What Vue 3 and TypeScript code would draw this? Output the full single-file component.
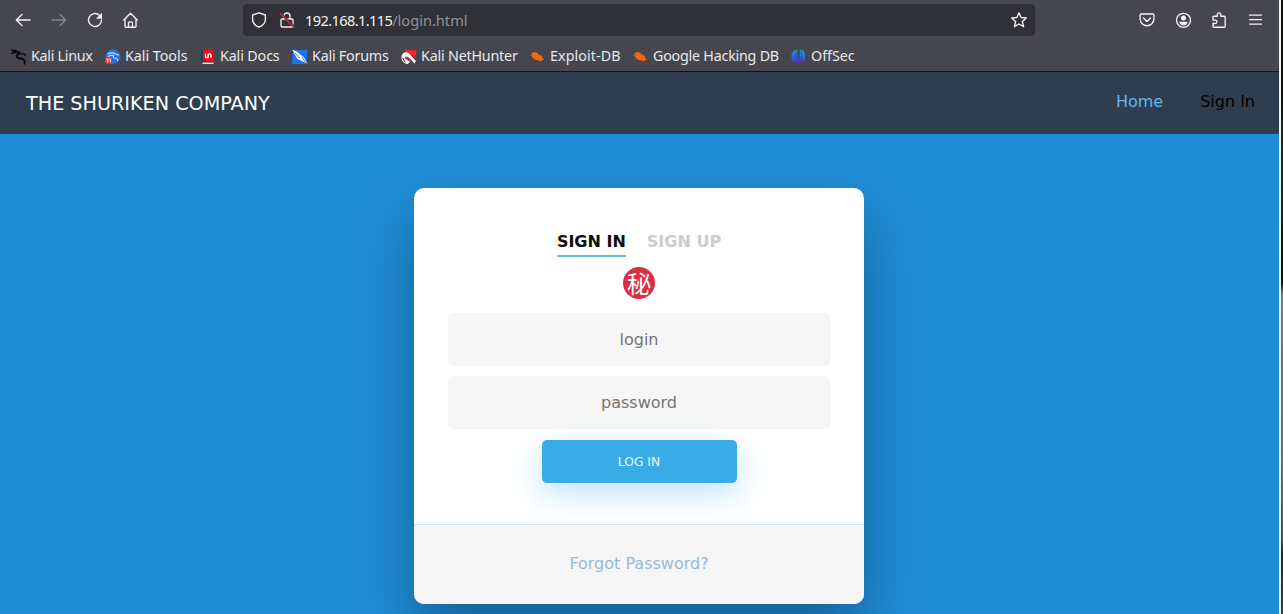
<script setup lang="ts">
interface Bookmark {
  label: string
  icon: string
  width: number
  spacing: number
}

const bookmarks: Bookmark[] = [
  { label: 'Kali Linux', icon: 'dragon', width: 94, spacing: -0.28 },
  { label: 'Kali Tools', icon: 'tools', width: 95, spacing: -0.03 },
  { label: 'Kali Docs', icon: 'docs', width: 92, spacing: -0.13 },
  { label: 'Kali Forums', icon: 'forums', width: 109, spacing: -0.22 },
  { label: 'Kali NetHunter', icon: 'nethunter', width: 129, spacing: -0.2 },
  { label: 'Exploit-DB', icon: 'bug', width: 103, spacing: 0.08 },
  { label: 'Google Hacking DB', icon: 'bug', width: 158, spacing: -0.23 },
  { label: 'OffSec', icon: 'offsec', width: 70, spacing: -0.03 },
]
</script>

<template>
  <div class="screen">
    <div class="window">
      <div class="toolbar">
        <div class="nav-buttons">
          <svg viewBox="0 0 16 16"><path d="M15 8H1.500M7 2.500 1.300 8 7 13.500" /></svg>
          <svg class="dim" viewBox="0 0 16 16"><path d="M1 8h13.500M9 2.500 14.700 8 9 13.500" /></svg>
          <svg viewBox="0 0 16 16"><path d="M12.400 3.200A6.500 6.500 0 1 0 14.500 8" /><path class="solid" d="M15 .8v6H9z" /></svg>
          <svg viewBox="0 0 16 16"><path d="M.8 8 7.500 1.200 14.200 8M2 7v7.200q0 1 1 1h9q1 0 1-1V7M5.500 15v-4.200q0-1 1-1h2q1 0 1 1V15" /></svg>
        </div>
        <div class="address">
          <svg viewBox="0 0 16 16"><path d="M8 .8 14.400 3v4.500c0 3.400-2.500 6-6.400 7.700C4.100 13.500 1.600 10.900 1.600 7.500V3z" /></svg>
          <svg class="lock" viewBox="0 0 16 16"><path d="M5 7V4a3 3 0 0 1 6 0v3M3 7h10q1 0 1 1v5.500q0 1.500-1.500 1.500h-9Q2 15 2 13.500V8q0-1 1-1z" /><path class="slash-gap" d="M2.600 1.400 15 13.800" /><path class="slash" d="M1.300 1.800 14.800 15.300" /></svg>
          <div class="url"><span class="host">192.168.1.115</span>/login.html</div>
          <svg class="star" viewBox="0 0 16 16"><path d="m8 .8 2.100 4.700 5.200.5-3.900 3.500 1.200 5.200L8 12l-4.600 2.700 1.200-5.200L.7 6l5.200-.5z" /></svg>
        </div>
        <div class="menu-buttons">
          <svg viewBox="0 0 16 16"><path d="M2.300 2h11.400q1.200 0 1.200 1.200v3.600a6.900 6.900 0 0 1-13.800 0V3.200Q1.100 2 2.300 2z" /><path d="m4.500 6 3.500 3.400L11.500 6" /></svg>
          <svg viewBox="0 0 16 16"><circle cx="8.500" cy="8.300" r="7" /><circle class="solid" cx="8.500" cy="6" r="2.500" /><path class="solid" d="M4.200 9.800h8.600c-.3 2.500-2 3.600-4.300 3.600s-4-1.100-4.300-3.600z" /></svg>
          <svg viewBox="0 0 16 16"><path d="M2 5.200q0-1 1-1h3.300V2.600a1.700 1.700 0 0 1 3.400 0v1.600h3.500q1 0 1 1v9q0 1-1 1H3q-1 0-1-1v-2.700h2.200a1.700 1.700 0 0 0 0-3.400H2z" /></svg>
          <svg viewBox="0 0 16 16"><path d="M2.500 3.100h12M2.500 7.600h12M2.500 12.100h12" /></svg>
        </div>
      </div>

      <div class="bookmarks">
        <div v-for="b in bookmarks" :key="b.label" class="bookmark" :style="{ width: b.width + 'px', letterSpacing: b.spacing + 'px' }">
          <svg v-if="b.icon === 'dragon'" viewBox="0 0 16 16">
            <g fill="none" stroke="#08080a" stroke-width="1.500" stroke-linecap="round"><path d="M.7 1.300c4 .2 6.500.7 8.500 3M.8 4.500C4 3 7 3 9 4.500l4 .4 1.500 1.200M3 2.500l5 1.500" /><path stroke-width="1.900" d="M8.200 4.800c-3 1.200-3.400 3.300-1.100 4.200 2.400 1 5-.1 6.200 2.300.6 1.200.3 2.200.4 3.400" /></g>
          </svg>
          <svg v-else-if="b.icon === 'tools'" viewBox="0 0 16 16">
            <circle cx="7.800" cy="7.700" r="7.200" fill="#2671ea" /><path d="M2.500 5c4-2 7-1 8.500.3l3 1M3 8c2-2 4-2 5.500-1.500-1 2 1 2.700 2.500 2.800q2 .6 2 3" fill="none" stroke="#c4e5ff" stroke-width="1.200" /><circle cx="3.500" cy="11.500" r="3.800" fill="#ef3038" /><path d="M1.600 10h1.200v3.300M4.300 10h1.200v3.300" fill="none" stroke="#fff" />
          </svg>
          <svg v-else-if="b.icon === 'docs'" viewBox="0 0 16 16">
            <path d="M1 .7h2.500v13.300H1z" fill="#173e70" /><path d="M3 .3h10.500v13H3z" fill="#e9101a" /><path d="M2.500 13h11v2h-11z" fill="#ddd" /><path d="M2.500 13h11" stroke="#8e0e17" /><path d="M5.500 4.800v2.400q0 1.800 1.400 1.500Q8.500 8.400 8.200 6.500 8 4.600 9.800 4.900q1.600.4 1.200 3.600" fill="none" stroke="#fff" stroke-width="1.400" />
          </svg>
          <svg v-else-if="b.icon === 'forums'" viewBox="0 0 16 16">
            <path d="M1 1h14.500l-1 14H0z" fill="#1477f5" /><path d="m.3.700 4.500 1.800 5 4.200 2.300 2 3.400 6.300-5-2.800-5.400-2.500L3.200 6z" fill="#fff" /><path d="m3 4 4.500 5M10 8l4.500 7" stroke="#34343a" stroke-width=".7" />
          </svg>
          <svg v-else-if="b.icon === 'nethunter'" viewBox="0 0 16 16">
            <path d="M4 1h11.500L14 13 1 12z" fill="#ed2532" /><path d="M.5 9.500C0 5 3.500 2 7.500 4L15 11.500 13.500 14.500 6.700 8c-2-1.500-4 .7-2 2.200l4.300 2.600L6.500 15.200C3 14 1 12.500.5 9.500z" fill="#fff" /><path d="m1.500 9 2.500 4M10.500 6l4.500 5.500M7 8.800l4 3.700" stroke="#34252a" stroke-width="1" />
          </svg>
          <svg v-else-if="b.icon === 'bug'" viewBox="0 0 16 16">
            <path d="M1 4.700 4 3.100l3.200.7 1.700 1.900 2.900 1.100.7 2.300 1.700 1.700-2 .2-1.300 1.300-2.700-.8-3.500-1-.8-1.500-2-1L2 6.900z" fill="#f5670f" /><path d="m0 6.500 2.700.2M2 10.200l2-1M10.300 4.800 9.500 6.500" stroke="#c45822" stroke-width=".8" />
          </svg>
          <svg v-else viewBox="0 0 16 16">
            <defs><linearGradient id="offsec-fade" x2="0" y2="1"><stop stop-color="#16a6bd" /><stop offset=".55" stop-color="#345fe0" /><stop offset="1" stop-color="#6426ce" /></linearGradient></defs>
            <path d="M6.300.7v9.500L3.700 14C-.7 11-.5 3.500 3.500 1.300zM8.700.7v9.500l2.600 3.800c4.400-3 4.200-10.500.2-12.700zM7 9h1v6H7z" fill="url(#offsec-fade)" /><path d="M4.500 2v9M10.500 2v9" stroke="#34466c" stroke-width=".6" />
          </svg>
          <span>{{ b.label }}</span>
        </div>
      </div>

      <header class="site-header">
        <div class="brand">THE SHURIKEN COMPANY</div>
        <nav><a class="home">Home</a><a>Sign In</a></nav>
      </header>

      <main>
        <section class="card">
          <div class="card-body">
            <div class="tabs"><h2 class="active">SIGN IN</h2><h2>SIGN UP</h2></div>
            <div class="seal">秘</div>
            <form @submit.prevent>
              <input type="text" placeholder="login" />
              <input type="password" placeholder="password" />
              <button type="submit">LOG IN</button>
            </form>
          </div>
          <footer><a>Forgot Password?</a></footer>
        </section>
      </main>
    </div>
    <div class="window-edge"></div>
    <div class="backdrop"></div>
  </div>
</template>

<style>
body { overflow: hidden; }
</style>

<style scoped>
* { box-sizing: border-box; }
.screen { display: flex; width: 1283px; height: 614px; overflow: hidden; font-family: "DejaVu Sans", sans-serif; }
.window { width: 1279px; height: 614px; overflow: hidden; background: #1f8dd6; }
.window-edge { width: 2px; background: #f2f2f6; }
.backdrop { width: 2px; background: linear-gradient(#11130e 0 15%, #0d3024 28%, #071009 46%, #627b91 48%, #577284 75%, #31575d 88%, #102b34 90%, #1b4b50); }
svg { display: block; flex: none; width: 16px; height: 16px; fill: none; stroke-linejoin: round; }
.toolbar svg { stroke: #f3f3f5; stroke-width: 1.35; stroke-linecap: round; }
.toolbar .solid { fill: #f3f3f5; stroke: none; }
.toolbar .dim { stroke: #85858c; }
.toolbar { display: flex; height: 40px; background: #46464f; font-family: "Noto Sans", sans-serif; }
.nav-buttons { display: flex; gap: 20px; width: 243px; padding: 12px 0 0 15px; }
.address { display: flex; width: 792px; height: 32px; margin-top: 4px; padding: 8px 8px 0; border-radius: 4px; background: #303037; }
.address .lock { margin-left: 12px; }
.toolbar .slash-gap { stroke: #303037; stroke-width: 1.2; }
.toolbar .slash { stroke: #e8203f; stroke-width: 1.5; }
.url { margin: -2px 0 0 10px; font-size: 14.6px; line-height: 20px; color: #929299; white-space: nowrap; }
.host { color: #f3f3f5; letter-spacing: -.62px; }
.star { margin-left: auto; }
.menu-buttons { display: flex; gap: 20px; padding: 12px 0 0 104px; }
.bookmarks { display: flex; height: 32px; padding-left: 11px; background: #46464f; border-bottom: 1px solid #11151a; font-family: "Noto Sans", sans-serif; font-size: 14.3px; line-height: 20px; color: #e9e9ec; }
.bookmark { display: flex; flex: none; padding-top: 6px; white-space: nowrap; }
.bookmark svg { margin: 3px 4px 0 0; }
.site-header { display: flex; justify-content: space-between; height: 62px; padding: 0 24px 0 26px; background: #2e3e4e; }
.brand { padding-top: 20px; font-size: 19.2px; line-height: 24px; color: #fff; white-space: nowrap; }
nav { display: flex; gap: 37px; padding-top: 20px; font-size: 16px; line-height: 20px; color: #000; }
.home { color: #61b5f4; }
main { display: flex; justify-content: center; padding: 54px 1px 0 0; }
.card { width: 450px; height: 416px; border-radius: 10px; overflow: hidden; background: #fff; box-shadow: 0 30px 60px rgba(0, 0, 0, .3); text-align: center; }
.card-body { height: 336px; padding: 43px 34px 0; }
.tabs { display: flex; justify-content: center; gap: 21px; height: 36px; }
h2 { height: 26px; margin: 0; font-size: 16px; line-height: 21px; color: #ccc; white-space: nowrap; }
.active { color: #0d0d0d; border-bottom: 2px solid #5fbae9; }
.seal { width: 32px; height: 32px; margin: 0 auto 14px; border-radius: 50%; background: #dd2e44; color: #fff; font: 400 24px/31px "Noto Sans CJK JP", sans-serif; }
form { display: flex; flex-direction: column; align-items: center; }
input { display: block; width: 382px; height: 53px; margin: 0 0 10px; padding: 0; border: 0; border-radius: 5px; background: #f6f6f6; text-align: center; font: 16px "DejaVu Sans", sans-serif; }
input::placeholder { color: #757575; opacity: 1; }
button { width: 195px; height: 43px; margin: 1px 0 0 1px; padding: 0 1px 0 0; border: 0; border-radius: 5px; background: #39ace7; color: #e8f7ff; font: 12.3px "DejaVu Sans", sans-serif; box-shadow: 0 10px 30px rgba(95, 186, 233, .4); }
footer { height: 80px; padding-top: 28px; background: #f6f6f6; border-top: 1px solid #d3e3ee; font-size: 16px; line-height: 21px; color: #92badd; }
</style>
